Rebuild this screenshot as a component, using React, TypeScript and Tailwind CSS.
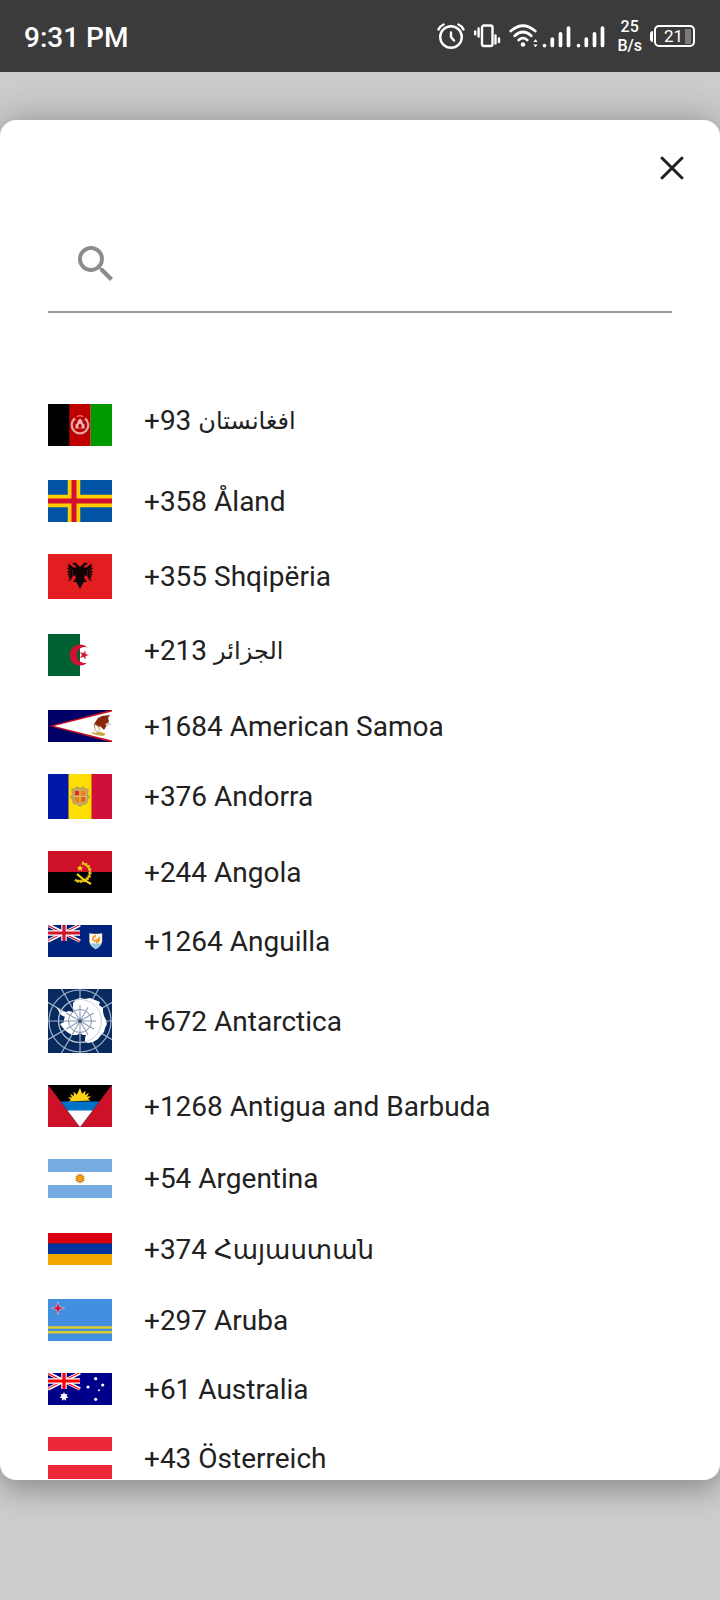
import type { ReactNode } from "react";

type Country = {
  code: string;
  name: string;
  height: number;
  flag: ReactNode;
  script?: "arabic" | "armenian";
};

function UnionJack({ red, blue }: { red: string; blue: string }) {
  return (
    <g>
      <rect width="32" height="16" fill={blue} />
      <path d="M0 0 32 16M32 0 0 16" stroke="#fff" strokeWidth="3.6" />
      <path d="M0 .6 32 16.6M32-.4 0 15.6" stroke={red} strokeWidth="1.1" />
      <path d="M16 0V16M0 8H32" stroke="#fff" strokeWidth="5.4" />
      <path d="M16 0V16M0 8H32" stroke={red} strokeWidth="3.2" />
    </g>
  );
}

const sunRays = Array.from({ length: 12 }, (_, i) => i * 30);

const countries: Country[] = [
  {
    code: "+93",
    name: "افغانستان",
    height: 42,
    script: "arabic",
    flag: (
      <>
        <rect width="22" height="42" fill="#000" />
        <rect x="21.3" width="21.4" height="42" fill="#bf0000" />
        <rect x="42.7" width="21.3" height="42" fill="#009900" />
        <path d="M27 14.500a8.300 8.300 0 1 0 10 0" fill="none" stroke="#e6a5a5" strokeWidth="2.200" />
        <path d="M27.500 24.500h9v-4l-1.500-1-1-3-2-2-2 2-1 3-1.500 1z" fill="#e9b4b4" />
        <path d="M30.500 24v-3q1.500-2.500 3 0v3z" fill="#bf0000" />
        <path d="M29 12.500q3-1.500 6 0" fill="none" stroke="#e6a5a5" strokeWidth="1.200" />
      </>
    ),
  },
  {
    code: "+358",
    name: "Åland",
    height: 42,
    flag: (
      <>
        <rect width="64" height="42" fill="#0053a5" />
        <path d="M26 0V42M0 21H64" stroke="#ffce00" strokeWidth="12.5" />
        <path d="M26 0V42M0 21H64" stroke="#d21034" strokeWidth="5" />
      </>
    ),
  },
  {
    code: "+355",
    name: "Shqipëria",
    height: 45,
    flag: (
      <>
        <rect width="64" height="45" fill="#e41e20" />
        <path
          d="M32 13l-2-2-3-3-3 2 3 1 1 3-3-1-5-4 1 3-2-1 2 3-2 0 2 3-2 0 2 3-2 0 2 2-1 1 2 1-2 3 3-1 1-3 3-2 1 3-3 4 3 0 2 3 2 4 2-4 2-3 3 0-3-4 1-3 3 2 1 3 3 1-2-3 2-1-1-1 2-2-2 0 2-3-2 0 2-3-2 0 2-3-2 1 1-3-5 4-3 1 1-3 3-1-3-2-3 3z"
          fill="#120405"
        />
        <path d="M22 14v12M42 14v12M24.500 16v9M39.500 16v9" stroke="#8b1718" strokeWidth=".5" />
      </>
    ),
  },
  {
    code: "+213",
    name: "الجزائر",
    height: 42,
    script: "arabic",
    flag: (
      <>
        <rect width="64" height="42" fill="#fff" />
        <rect width="32" height="42" fill="#006233" />
        <path d="M39.500 13.500a10.500 10.500 0 1 0 0 15a8 8 0 1 1 0-15z" fill="#d21034" />
        <path d="M41 21 37.500 22.100 37.500 25.800 35.400 22.800 31.900 24 34 21 31.900 18 35.400 19.200 37.500 16.200 37.500 19.900z" fill="#d21034" />
      </>
    ),
  },
  {
    code: "+1684",
    name: "American Samoa",
    height: 32,
    flag: (
      <>
        <rect width="64" height="32" fill="#006" />
        <path d="M1 16 64-.5v33z" fill="#bd1021" />
        <path d="M6 16 64 1.500v29z" fill="#fff" />
        <path d="M46 14l4-6 4-2 8-1-2 3 1 3-2 4-3 5-4-4-3 4-3-3z" fill="#88280b" />
        <path d="M46 14l4 2 2 3-2 4-3-3z" fill="#f8f2e4" stroke="#a07656" strokeWidth=".6" />
        <path d="M43 18l4 5 6-1 5 2-3 2-7-1-5-2 3-1z" fill="#c9a541" />
        <path d="M57 14l5-2 1 3-4 1z" fill="#d3d3d3" />
      </>
    ),
  },
  {
    code: "+376",
    name: "Andorra",
    height: 45,
    flag: (
      <>
        <rect width="64" height="45" fill="#ffdf00" />
        <rect width="20.500" height="45" fill="#0018a8" />
        <rect x="43.500" width="20.500" height="45" fill="#d0103a" />
        <path d="M23 15l4-1 2-2 3 2 3-2 2 2 4 1-1 5 2 3-2 3-1 4-4 1-3 2-3-2-4-1-1-4-2-3 2-3z" fill="#bfa34d" />
        <path d="M26 16h12v10q-1 4-6 4t-6-4z" fill="#e8841c" stroke="#c7b37f" strokeWidth="1" />
        <path d="M27 17h4v4h-4z" fill="#e02c26" />
        <path d="M32 16v14M26 22.500h12" stroke="#d9bd78" strokeWidth="1" />
        <path d="M34 24h3M34 26h3" stroke="#c4351c" strokeWidth="1" />
      </>
    ),
  },
  {
    code: "+244",
    name: "Angola",
    height: 42,
    flag: (
      <>
        <rect width="64" height="42" fill="#000" />
        <rect width="64" height="21" fill="#ce1126" />
        <path d="M34 12q8 2 8 9t-7 9q-4 1-8-1" fill="none" stroke="#e8c11c" strokeWidth="2" />
        <path d="M34 12q8 2 8 9t-7 9q-4 1-8-1" fill="none" stroke="#e8c11c" strokeWidth="3.600" strokeDasharray="1.300 2" />
        <path d="M29 23q6 6 14 10" fill="none" stroke="#f9d616" strokeWidth="2" />
        <path d="M32 14l1 2.200 2.300.1-1.800 1.500.6 2.300-2.100-1.300-2.100 1.300.6-2.300-1.800-1.500 2.300-.1z" fill="#f9d616" />
      </>
    ),
  },
  {
    code: "+1264",
    name: "Anguilla",
    height: 32,
    flag: (
      <>
        <rect width="64" height="32" fill="#00247d" />
        <UnionJack red="#cf142b" blue="#00247d" />
        <path d="M41.500 8.500q6.500 1 12.500 0v8q-1 5-6.300 7.500-5.200-2.500-6.200-7.500z" fill="#fbf8ee" stroke="#d6cba2" strokeWidth=".5" />
        <path d="M42.500 18.500h10.500q-1.500 3-5.300 5-3.700-2-5.200-5z" fill="#8fc5e8" />
        <path d="M45 15.500q-1-4.500 3-4.500M51 12q1 5-3 5.500M45.500 16.500l5-2" fill="none" stroke="#f79420" strokeWidth="1.800" />
      </>
    ),
  },
  {
    code: "+672",
    name: "Antarctica",
    height: 64,
    flag: (
      <>
        <rect width="64" height="64" fill="#072b5f" />
        <g fill="none" stroke="#a3b1c7" strokeWidth="1.200">
          <circle cx="32" cy="32" r="31" />
          <circle cx="32" cy="32" r="21.500" />
          {[0, 30, 60, 90, 120, 150].map((a) => (
            <path key={a} d="M-12 32H76" transform={`rotate(${a} 32 32)`} />
          ))}
        </g>
        <path
          d="M8 18l5 4 5 1 3-1 4 1 0-5 0-4 4-4 3-1 5 1 5-1 5 2 5 2-1 3 4 3 0 4 1 4 2 4 1 4-2 4-1 4-3 3-3 4-5 3-5 1-3-1 0-4 1-3-3 0-3-2-3 2-5 0-5-3-4-4-3-4 4-2 0-3 1-2-4-2-3-5z"
          fill="#fff"
        />
        <g fill="none" stroke="#8394b1" strokeWidth="1">
          <circle cx="32" cy="32" r="11.500" />
          {[0, 30, 60, 90, 120, 150].map((a) => (
            <path key={a} d="M16 32H48" transform={`rotate(${a} 32 32)`} />
          ))}
        </g>
        <circle cx="32" cy="32" r="21.500" fill="none" stroke="#b9c4d4" strokeWidth=".8" />
        <circle cx="32" cy="32" r="2" fill="#3f5a82" />
      </>
    ),
  },
  {
    code: "+1268",
    name: "Antigua and Barbuda",
    height: 42,
    flag: (
      <>
        <rect width="64" height="42" fill="#ce1126" />
        <path d="M0 0h64L32 42z" fill="#000" />
        <path d="M12.500 16.500h39L32 42z" fill="#0072c6" />
        <path d="M19.500 25.500h25L32 42z" fill="#fff" />
        <path d="M20 16.500l3-1.500-3-3 4 .8-2-4 4 2.200-.5-4.500 3.300 3.300L32 3l2.200 5.800 3.300-3.300-.5 4.500 4-2.200-2 4 4-.8-3 3 3 1.500z" fill="#fcd116" />
      </>
    ),
  },
  {
    code: "+54",
    name: "Argentina",
    height: 39,
    flag: (
      <>
        <rect width="64" height="39" fill="#74acdf" />
        <rect y="13" width="64" height="13" fill="#fff" />
        {sunRays.map((a) => (
          <path key={a} d="M32 14.300V19.500" stroke="#d9a866" strokeWidth="1.200" transform={`rotate(${a} 32 19.5)`} />
        ))}
        <circle cx="32" cy="19.500" r="3.400" fill="#f0a50c" stroke="#b97518" strokeWidth=".9" />
      </>
    ),
  },
  {
    code: "+374",
    name: "Հայաստան",
    height: 32,
    script: "armenian",
    flag: (
      <>
        <rect width="64" height="32" fill="#f2a800" />
        <rect width="64" height="21" fill="#0033a0" />
        <rect width="64" height="10.500" fill="#d90012" />
      </>
    ),
  },
  {
    code: "+297",
    name: "Aruba",
    height: 42,
    flag: (
      <>
        <rect width="64" height="42" fill="#418fde" />
        <path d="M0 28.500H64M0 33.300H64" stroke="#e0c92f" strokeWidth="2.600" />
        <path d="M10 2.800 11.500 7.800 16.500 9.300 11.500 10.800 10 15.800 8.500 10.800 3.500 9.300 8.500 7.800z" fill="#d21034" stroke="#dcd3e6" strokeWidth=".6" />
      </>
    ),
  },
  {
    code: "+61",
    name: "Australia",
    height: 32,
    flag: (
      <>
        <rect width="64" height="32" fill="#00008b" />
        <UnionJack red="#ff0000" blue="#00008b" />
        <path d="M16 19l1.100 2.300 2.500-.6-1.100 2.300 2 1.600-2.500.6v2.600l-2-1.600-2 1.600v-2.600l-2.500-.6 2-1.600-1.100-2.300 2.500.6z" fill="#fff" />
        <g fill="#fff">
          <circle cx="47.700" cy="5.700" r="1.600" />
          <circle cx="40" cy="14" r="1.600" />
          <circle cx="54.700" cy="12" r="1.600" />
          <circle cx="51" cy="17.300" r="1" />
          <circle cx="47.700" cy="26.300" r="1.600" />
        </g>
      </>
    ),
  },
  {
    code: "+43",
    name: "Österreich",
    height: 42,
    flag: (
      <>
        <rect width="64" height="42" fill="#ed2939" />
        <rect y="14" width="64" height="14" fill="#fff" />
      </>
    ),
  },
];

// Arabic and Armenian glyphs need a taller line than Latin ones.
const labelClass = {
  latin: "items-baseline pt-px",
  arabic: "h-[47px] items-center pb-[7px]",
  armenian: "h-[37px] items-center pt-[3px]",
};

const nameClass = {
  latin: "",
  arabic: "text-[24px]",
  armenian: "text-[26px]",
};

function CountryRow({ country }: { country: Country }) {
  const script = country.script ?? "latin";
  return (
    <li>
      <button type="button" className="flex w-full items-center gap-8 py-4 text-left">
        <svg width="64" height={country.height} viewBox={`0 0 64 ${country.height}`} className="shrink-0" aria-hidden="true">
          {country.flag}
        </svg>
        <span className={`flex text-[28px] leading-7 whitespace-pre text-[#212121] ${labelClass[script]}`}>
          <span>{country.code} </span>
          <span className={nameClass[script]}>{country.name}</span>
        </span>
      </button>
    </li>
  );
}

function Signal() {
  return (
    <svg width="30" height="28" viewBox="0 0 30 28" stroke="#fff" strokeWidth="3.700" strokeLinecap="round" aria-hidden="true">
      <path d="M2.500 23.500v.1M10.300 17v6.500M18.500 11.800v11.700M26.500 6v17.500" />
    </svg>
  );
}

function StatusBar() {
  return (
    <header className="flex h-[72px] shrink-0 items-center justify-between bg-[#3b3b3b] pr-[25px] pl-6 font-medium text-white">
      <span className="pt-1 text-[28px] leading-8">9:31 PM</span>
      <div className="flex items-center">
        <svg width="28" height="28" viewBox="0 0 28 28" fill="none" stroke="#fff" strokeWidth="2.400" strokeLinecap="round" aria-hidden="true">
          <circle cx="14" cy="15" r="10.800" />
          <path d="M14 10.500V15l3 3.500M1.500 7.500Q3 4 6.500 2.500M26.500 7.500Q25 4 21.500 2.500" />
        </svg>
        <svg width="28" height="28" viewBox="0 0 28 28" fill="none" stroke="#fff" strokeWidth="2.400" strokeLinecap="round" className="ml-2" aria-hidden="true">
          <rect x="9" y="3.500" width="10.500" height="20.500" rx="2" />
          <path d="M2.200 9.500v2.800M5.600 6.500v8M22.500 13.500v8M26 16.500v3.500" />
        </svg>
        <svg width="32" height="28" viewBox="0 0 32 28" fill="none" stroke="#fff" strokeWidth="2.800" strokeLinecap="round" className="ml-2" aria-hidden="true">
          <path d="M1.800 9Q14-1.600 26.200 9M5.800 13.700Q14 6.200 22.200 13.700M9.800 18Q14 14.200 18.200 18" />
          <circle cx="14" cy="22.500" r="2.300" fill="#fff" stroke="none" />
          <path d="M24.300 20 26.500 17.300 28.700 20zM24.300 22.500 26.500 25.200 28.700 22.500z" fill="#fff" stroke="none" />
        </svg>
        <div className="ml-px flex gap-1">
          <Signal />
          <Signal />
        </div>
        <span className="ml-[11px] text-center text-[16px] leading-[19px]">
          25
          <br />
          B/s
        </span>
        <div className="ml-2 flex items-center gap-px">
          <span className="h-[11px] w-[3px] rounded-l-full bg-white" />
          <div className="flex h-[22px] w-[41px] items-center justify-end gap-0.5 rounded-[5px] border-2 border-white pr-0.5 font-normal">
            <span className="text-[17px] leading-5">21</span>
            <span className="h-[15px] w-1.5 bg-[#7a7a7a]" />
          </div>
        </div>
      </div>
    </header>
  );
}

export default function App() {
  return (
    <div className="flex h-screen flex-col overflow-hidden bg-[#ccc] font-['Roboto','Noto_Sans','DejaVu_Sans',sans-serif]">
      <StatusBar />
      <main className="flex min-h-0 flex-1 flex-col pt-12 pb-[120px]">
        <section
          role="dialog"
          aria-label="Country code"
          className="flex min-h-0 flex-1 flex-col overflow-hidden rounded-2xl bg-white px-12 shadow-[0_0_36px_rgba(0,0,0,0.28),0_14px_24px_rgba(0,0,0,0.13)]"
        >
          <div className="flex justify-end pt-6">
            <button type="button" aria-label="Close" className="-mr-6 flex size-12 items-center justify-center">
              <svg width="24" height="24" viewBox="0 0 24 24" stroke="#212121" strokeWidth="3" aria-hidden="true">
                <path d="M1.200 1.200 22.800 22.800M22.800 1.200 1.200 22.800" />
              </svg>
            </button>
          </div>
          <label className="mt-6 flex h-[97px] shrink-0 items-center border-b-2 border-[#9a9a9a] pl-6">
            <svg width="48" height="48" viewBox="0 0 24 24" fill="#8c8c8c" className="shrink-0" aria-hidden="true">
              <path d="M15.500 14h-.79l-.28-.27A6.471 6.471 0 0 0 16 9.500 6.500 6.500 0 1 0 9.500 16c1.610 0 3.090-.59 4.230-1.570l.27.280v.79l5 4.990L20.490 19l-4.990-5zm-6 0C7.010 14 5 11.990 5 9.500S7.010 5 9.500 5 14 7.010 14 9.500 11.990 14 9.500 14z" />
            </svg>
            <input type="text" aria-label="Search countries" className="min-w-0 flex-1 bg-transparent px-4 text-[28px] outline-none" />
          </label>
          <ul className="mt-18 min-h-0 flex-1 overflow-y-auto [scrollbar-width:none]">
            {countries.map((country) => (
              <CountryRow key={country.code} country={country} />
            ))}
          </ul>
        </section>
      </main>
    </div>
  );
}
